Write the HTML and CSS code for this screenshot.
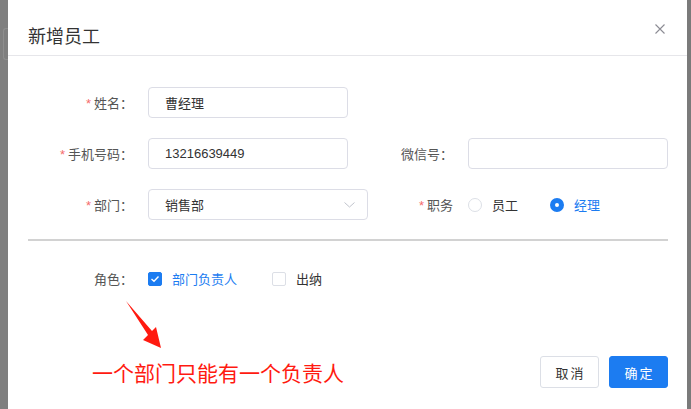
FILE: index.html
```html
<!DOCTYPE html>
<html lang="zh-CN">
<head>
<meta charset="utf-8">
<title>新增员工</title>
<link rel="stylesheet" href="styles.css">
</head>
<body>
<div class="screen">
  <div class="side-left"><div class="ghost"></div></div>
  <div class="dialog">
    <div class="dlg-header">
      <span class="dlg-title">新增员工</span>
      <svg class="dlg-close" width="10" height="10" viewBox="0 0 10 10"><path d="M0.5 0.5 L9.5 9.5 M9.5 0.5 L0.5 9.5" stroke="#8c8c94" stroke-width="1.1" fill="none"/></svg>
    </div>
    <div class="dlg-body">
      <div class="form-row">
        <div class="field">
          <label class="label req">姓名：</label>
          <div class="input"><span class="val">曹经理</span></div>
        </div>
      </div>
      <div class="form-row">
        <div class="field">
          <label class="label req">手机号码：</label>
          <div class="input"><span class="val num">13216639449</span></div>
        </div>
        <div class="field">
          <label class="label">微信号：</label>
          <div class="input"></div>
        </div>
      </div>
      <div class="form-row">
        <div class="field">
          <label class="label req">部门：</label>
          <div class="input select"><span class="val">销售部</span>
            <svg class="chev" width="11" height="6" viewBox="0 0 11 6"><path d="M0.5 0.5 L5.5 5 L10.5 0.5" stroke="#c0c4cc" stroke-width="1" fill="none"/></svg>
          </div>
        </div>
        <div class="field">
          <label class="label req">职务</label>
          <div class="radios">
            <span class="radio"><span class="dot"></span>员工</span>
            <span class="radio on"><span class="dot"></span>经理</span>
          </div>
        </div>
      </div>
      <div class="divider"></div>
      <div class="form-row role-row">
        <div class="field">
          <label class="label">角色：</label>
          <div class="checks">
            <span class="check on"><span class="box"><svg width="10" height="8" viewBox="0 0 10 8"><path d="M1.5 4 L4 6.3 L8.5 1.5" stroke="#fff" stroke-width="1.4" fill="none"/></svg></span>部门负责人</span>
            <span class="check"><span class="box"></span>出纳</span>
          </div>
        </div>
      </div>
      <div class="footer">
        <span class="note">一个部门只能有一个负责人</span>
        <div class="btns">
          <button class="btn">取消</button>
          <button class="btn primary">确定</button>
        </div>
      </div>
    </div>
    <svg class="arrow" width="679" height="409" viewBox="0 0 679 409">
      <polygon points="118,301 144,331 148,327 153,348 135,340 140,335" fill="#ff1a10"/>
    </svg>
  </div>
  <div class="side-right"></div>
</div>
</body>
</html>
```
FILE: styles.css
```css
html, body {
  margin: 0;
  padding: 0;
  background: #7f7f7f;
}
body {
  font-family: "Liberation Sans", "Noto Sans CJK SC", sans-serif;
  font-size: 13px;
  color: #333;
}
.screen {
  display: flex;
  width: 691px;
  height: 409px;
  overflow: hidden;
}
.side-left {
  width: 8px;
  flex: none;
  background: #7f7f7f;
}
.ghost {
  margin: 28px 0 0 3px;
  height: 30px;
  border: 1px solid #8e8e8e;
  border-right: none;
  border-radius: 3px 0 0 3px;
}
.side-right {
  width: 4px;
  flex: none;
  background: #7a7a7a;
}
.dialog {
  position: relative;
  width: 679px;
  flex: none;
  background: #fff;
}
.dlg-header {
  display: flex;
  justify-content: space-between;
  align-items: flex-start;
  height: 56px;
  box-sizing: border-box;
  padding: 24px 22px 0 20px;
  border-bottom: 1px solid #e6e6ea;
}
.dlg-title {
  font-family: "Noto Sans CJK SC", sans-serif;
  font-size: 18px;
  line-height: 22px;
  color: #333;
}
.dlg-close {
  display: block;
}
.dlg-body {
  padding: 31px 19px 0 20px;
}
.form-row {
  display: flex;
  height: 31px;
  margin-bottom: 20px;
}
.field {
  display: flex;
  align-items: center;
  width: 320px;
  height: 31px;
  flex: none;
}
.label {
  flex: none;
  width: 105px;
  margin-right: 15px;
  text-align: right;
  line-height: 31px;
  color: #555;
  font-family: "Noto Sans CJK SC", sans-serif;
  white-space: nowrap;
}
.label.req::before {
  content: "*";
  color: #f56c6c;
  margin-right: 3px;
  font-family: "Liberation Sans", sans-serif;
}
.input {
  position: relative;
  display: flex;
  align-items: center;
  flex: none;
  width: 200px;
  height: 31px;
  box-sizing: border-box;
  border: 1px solid #dcdde6;
  border-radius: 4px;
  padding-left: 16px;
}
.input.select {
  width: 220px;
  margin-right: -20px;
  justify-content: space-between;
  padding-right: 12px;
}
.val {
  color: #333;
  font-family: "Noto Sans CJK SC", sans-serif;
}
.val.num {
  font-family: "Liberation Sans", sans-serif;
}
.chev {
  display: block;
}
.radios, .checks {
  display: flex;
  align-items: center;
  flex: none;
  white-space: nowrap;
  font-family: "Noto Sans CJK SC", sans-serif;
}
.radio {
  display: flex;
  align-items: center;
  margin-right: 32px;
  color: #333;
}
.radio .dot {
  width: 14px;
  height: 14px;
  box-sizing: border-box;
  border: 1px solid #dcdfe6;
  border-radius: 50%;
  margin-right: 10px;
}
.radio.on {
  color: #1c7cf1;
}
.radio.on .dot {
  border: 5px solid #1c7cf1;
  background: #fff;
}
.divider {
  height: 2px;
  background: #d2d2d2;
  margin: -1px 0 22px;
}
.role-row {
  margin-bottom: 0;
}
.check {
  display: flex;
  align-items: center;
  margin-right: 35px;
  color: #333;
}
.check .box {
  display: flex;
  align-items: center;
  justify-content: center;
  flex: none;
  width: 14px;
  height: 14px;
  box-sizing: border-box;
  border: 1px solid #dcdfe6;
  border-radius: 2px;
  margin-right: 10px;
  background: #fff;
}
.check.on {
  color: #1c7cf1;
}
.check.on .box {
  background: #1c7cf1;
  border-color: #1c7cf1;
}
.footer {
  display: flex;
  align-items: center;
  height: 32px;
  margin-top: 62px;
}
.note {
  margin-left: 64px;
  font-family: "Noto Sans CJK SC", sans-serif;
  font-size: 21px;
  line-height: 32px;
  color: #ff1a10;
}
.btns {
  display: flex;
  margin-left: auto;
}
.btn {
  width: 59px;
  height: 32px;
  margin-left: 10px;
  box-sizing: border-box;
  border: 1px solid #dcdfe6;
  border-radius: 3px;
  background: #fff;
  color: #333;
  font-family: "Noto Sans CJK SC", sans-serif;
  font-size: 13px;
  letter-spacing: 2px;
  text-indent: 2px;
  padding: 0;
}
.btn.primary {
  background: #1c7cf1;
  border-color: #1c7cf1;
  color: #fff;
}
.arrow {
  position: absolute;
  left: 0;
  top: 0;
  pointer-events: none;
}
```
